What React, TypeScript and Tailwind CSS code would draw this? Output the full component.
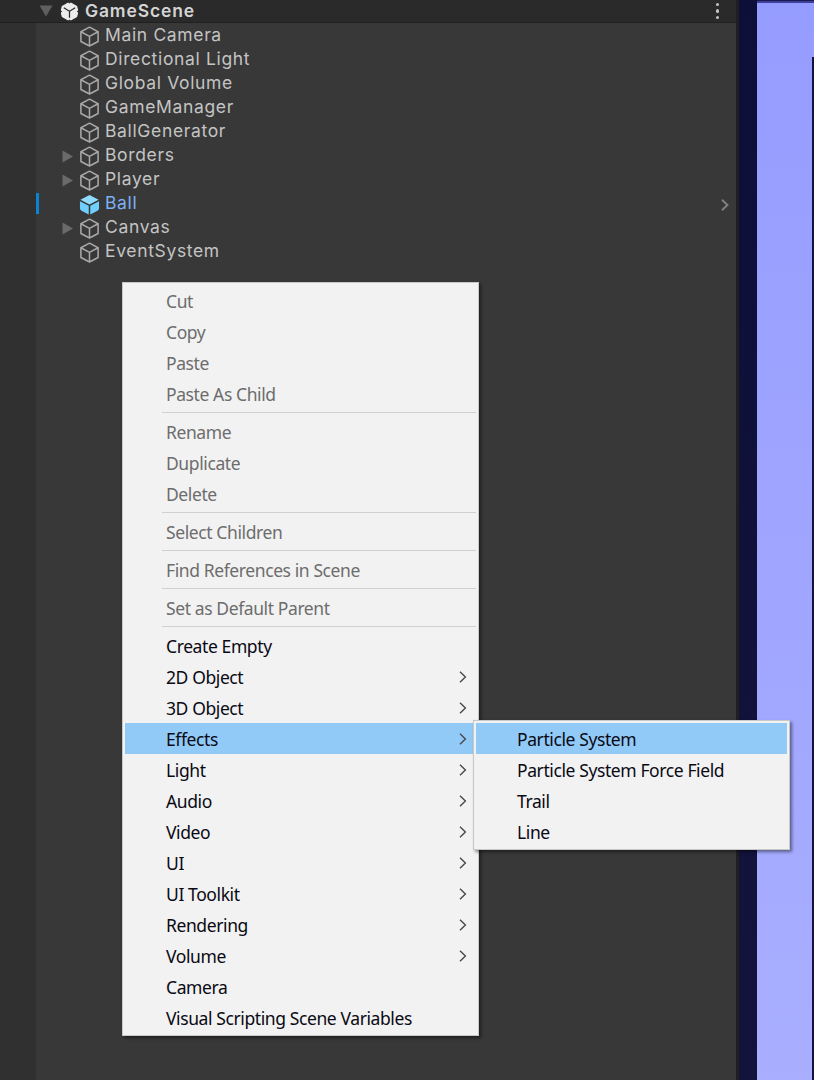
const Cube = ({ filled = false }: { filled?: boolean }) =>
  filled ? (
    <svg width="21" height="21" viewBox="0 0 22 22" className="shrink-0 mt-[2px]">
      <path d="M11 1 L20.5 6 L11 11 L1.5 6 Z" fill="#8fdcff" />
      <path d="M1 7.5 L10.2 12.4 V21.5 L2.6 17.6 Q1 16.8 1 15 Z" fill="#6fd0fd" />
      <path d="M21 7.5 L11.8 12.4 V21.5 L19.4 17.6 Q21 16.8 21 15 Z" fill="#6fd0fd" />
    </svg>
  ) : (
    <svg width="21" height="21" viewBox="0 0 22 22" fill="none" stroke="#a9a9a9" strokeWidth="1.6" strokeLinejoin="round" className="shrink-0 mt-[2px]">
      <path d="M11 1.2 L20 6 V16.2 L11 21 L2 16.2 V6 Z" />
      <path d="M2 6 L11 10.8 L20 6 M11 10.8 V21" />
    </svg>
  );

const Arrow = ({ open = false }: { open?: boolean }) =>
  open ? (
    <svg width="14" height="12" viewBox="0 0 14 12" className="shrink-0">
      <path d="M0.5 0.5 H13.5 L7 11.5 Z" fill="#5f5f5f" />
    </svg>
  ) : (
    <svg width="11" height="13" viewBox="0 0 11 13" className="shrink-0">
      <path d="M0.5 0.5 L11 6.5 L0.5 12.5 Z" fill="#6a6a6a" />
    </svg>
  );

const UnityLogo = () => (
  <svg width="19" height="21" viewBox="0 0 20 21" className="shrink-0">
    <path d="M10 0.3 L18 4.8 L19.6 10.5 L18 16.2 L10 20.7 L2 16.2 L0.4 10.5 L2 4.8 Z" fill="#ececec" />
    <path d="M10 10.2 L4 6.6 M10 10.2 L16 6.6 M10 10.2 V17" stroke="#2a2a2a" strokeWidth="1.3" fill="none" />
    <path d="M0 8.5 L2.2 10.5 L0 12.5 Z M20 8.5 L17.8 10.5 L20 12.5 Z M7.5 0 L10 2 L12.5 0 Z M7.5 21 L10 19 L12.5 21 Z" fill="#2a2a2a" />
  </svg>
);

const Chevron = ({ color = "#4a4a4a", w = 1.4 }: { color?: string; w?: number }) => (
  <svg width="8" height="12" viewBox="0 0 8 12" fill="none" stroke={color} strokeWidth={w} className="shrink-0">
    <path d="M1 0.8 L6.4 6 L1 11.2" />
  </svg>
);

type TreeRow = { name: string; arrow?: boolean; selected?: boolean };
const tree: TreeRow[] = [
  { name: "Main Camera" },
  { name: "Directional Light" },
  { name: "Global Volume" },
  { name: "GameManager" },
  { name: "BallGenerator" },
  { name: "Borders", arrow: true },
  { name: "Player", arrow: true },
  { name: "Ball", selected: true },
  { name: "Canvas", arrow: true },
  { name: "EventSystem" },
];

const MenuRow = ({ label, disabled, sub, active }: { label: string; disabled?: boolean; sub?: boolean; active?: boolean }) => (
  <div className={`h-[31px] flex items-center pl-[41px] pr-[9px] pt-px ${active ? "bg-[#91c9f7]" : ""} ${disabled ? "text-[#6d6d6d]" : "text-[#0a0a14]"}`}>
    <span className="flex-1 whitespace-nowrap">{label}</span>
    {sub && <span className="-mt-px flex"><Chevron /></span>}
  </div>
);

const Sep = () => (
  <div className="h-[7px] pl-[37px] flex items-center">
    <div className="h-px w-full bg-[#d0d0d0]" />
  </div>
);

const menuFont = "font-['Noto_Sans','Open_Sans',sans-serif] text-[17.5px] tracking-[-0.4px]";

export default function App() {
  return (
    <div className="relative w-[814px] h-[1080px] overflow-hidden flex bg-[#383838]">
      <div className="w-[36px] bg-[#303030] flex flex-col">
        <div className="h-[23px] bg-[#2a2a2a] border-b border-[#1f1f1f]" />
      </div>
      <div className="w-[700px] flex flex-col bg-[#383838] font-['Inter',sans-serif] text-[17.5px] tracking-[0.65px] text-[#c4c4c4]">
        <div className="h-[23px] shrink-0 bg-[#2a2a2a] border-b border-[#202020] flex items-center pl-[3px] pr-[17px] font-semibold text-[#d4d4d4]">
          <Arrow open />
          <span className="ml-[7px] flex"><UnityLogo /></span>
          <span className="ml-[6px] flex-1 leading-none tracking-[0.85px]">GameScene</span>
          <div className="flex flex-col gap-[3px]">
            <i className="block w-[3.5px] h-[3.5px] rounded-full bg-[#c4c4c4]" />
            <i className="block w-[3.5px] h-[3.5px] rounded-full bg-[#c4c4c4]" />
            <i className="block w-[3.5px] h-[3.5px] rounded-full bg-[#c4c4c4]" />
          </div>
        </div>
        {tree.map((r) => (
          <div key={r.name} className="relative h-[24px] shrink-0 flex items-center">
            {r.selected && <div className="absolute left-0 top-[2px] w-[3px] h-[21px] bg-[#0a84d0]" />}
            <div className="w-[17px] ml-[26px] mt-[3px] shrink-0 flex">{r.arrow && <Arrow />}</div>
            <Cube filled={r.selected} />
            <span className={`ml-[5px] flex-1 leading-none ${r.selected ? "text-[#7cb0f5]" : ""}`}>{r.name}</span>
            {r.selected && <span className="mr-[7px] mt-[4px] flex"><Chevron color="#7f7f7f" w={2} /></span>}
          </div>
        ))}
      </div>
      <div className="w-[3px] bg-[#1f1f1f]" />
      <div className="w-[18px] bg-gradient-to-b from-[#0d0f38] to-[#14133c]" />
      <div className="relative flex-1 bg-gradient-to-b from-[#959cff] to-[#a9aeff]">
        <div className="h-[3px] bg-[#3d3f9a] border-t border-[#1a1a50]" />
        <div className="absolute right-0 top-[57px] bottom-0 w-[2px] bg-[#12123c]" />
      </div>

      <div className={`absolute left-[122px] top-[282px] w-[357px] bg-[#f2f2f2] border border-[#c8c8c8] p-[2px] shadow-[2px_2px_3px_rgba(0,0,0,0.45)] ${menuFont}`}>
        <MenuRow label="Cut" disabled />
        <MenuRow label="Copy" disabled />
        <MenuRow label="Paste" disabled />
        <MenuRow label="Paste As Child" disabled />
        <Sep />
        <MenuRow label="Rename" disabled />
        <MenuRow label="Duplicate" disabled />
        <MenuRow label="Delete" disabled />
        <Sep />
        <MenuRow label="Select Children" disabled />
        <Sep />
        <MenuRow label="Find References in Scene" disabled />
        <Sep />
        <MenuRow label="Set as Default Parent" disabled />
        <Sep />
        <MenuRow label="Create Empty" />
        <MenuRow label="2D Object" sub />
        <MenuRow label="3D Object" sub />
        <MenuRow label="Effects" sub active />
        <MenuRow label="Light" sub />
        <MenuRow label="Audio" sub />
        <MenuRow label="Video" sub />
        <MenuRow label="UI" sub />
        <MenuRow label="UI Toolkit" sub />
        <MenuRow label="Rendering" sub />
        <MenuRow label="Volume" sub />
        <MenuRow label="Camera" />
        <MenuRow label="Visual Scripting Scene Variables" />
      </div>

      <div className={`absolute left-[473px] top-[720px] w-[317px] bg-[#f2f2f2] border border-[#c8c8c8] p-[2px] shadow-[2px_2px_3px_rgba(0,0,0,0.45)] ${menuFont}`}>
        <MenuRow label="Particle System" active />
        <MenuRow label="Particle System Force Field" />
        <MenuRow label="Trail" />
        <MenuRow label="Line" />
      </div>
    </div>
  );
}
